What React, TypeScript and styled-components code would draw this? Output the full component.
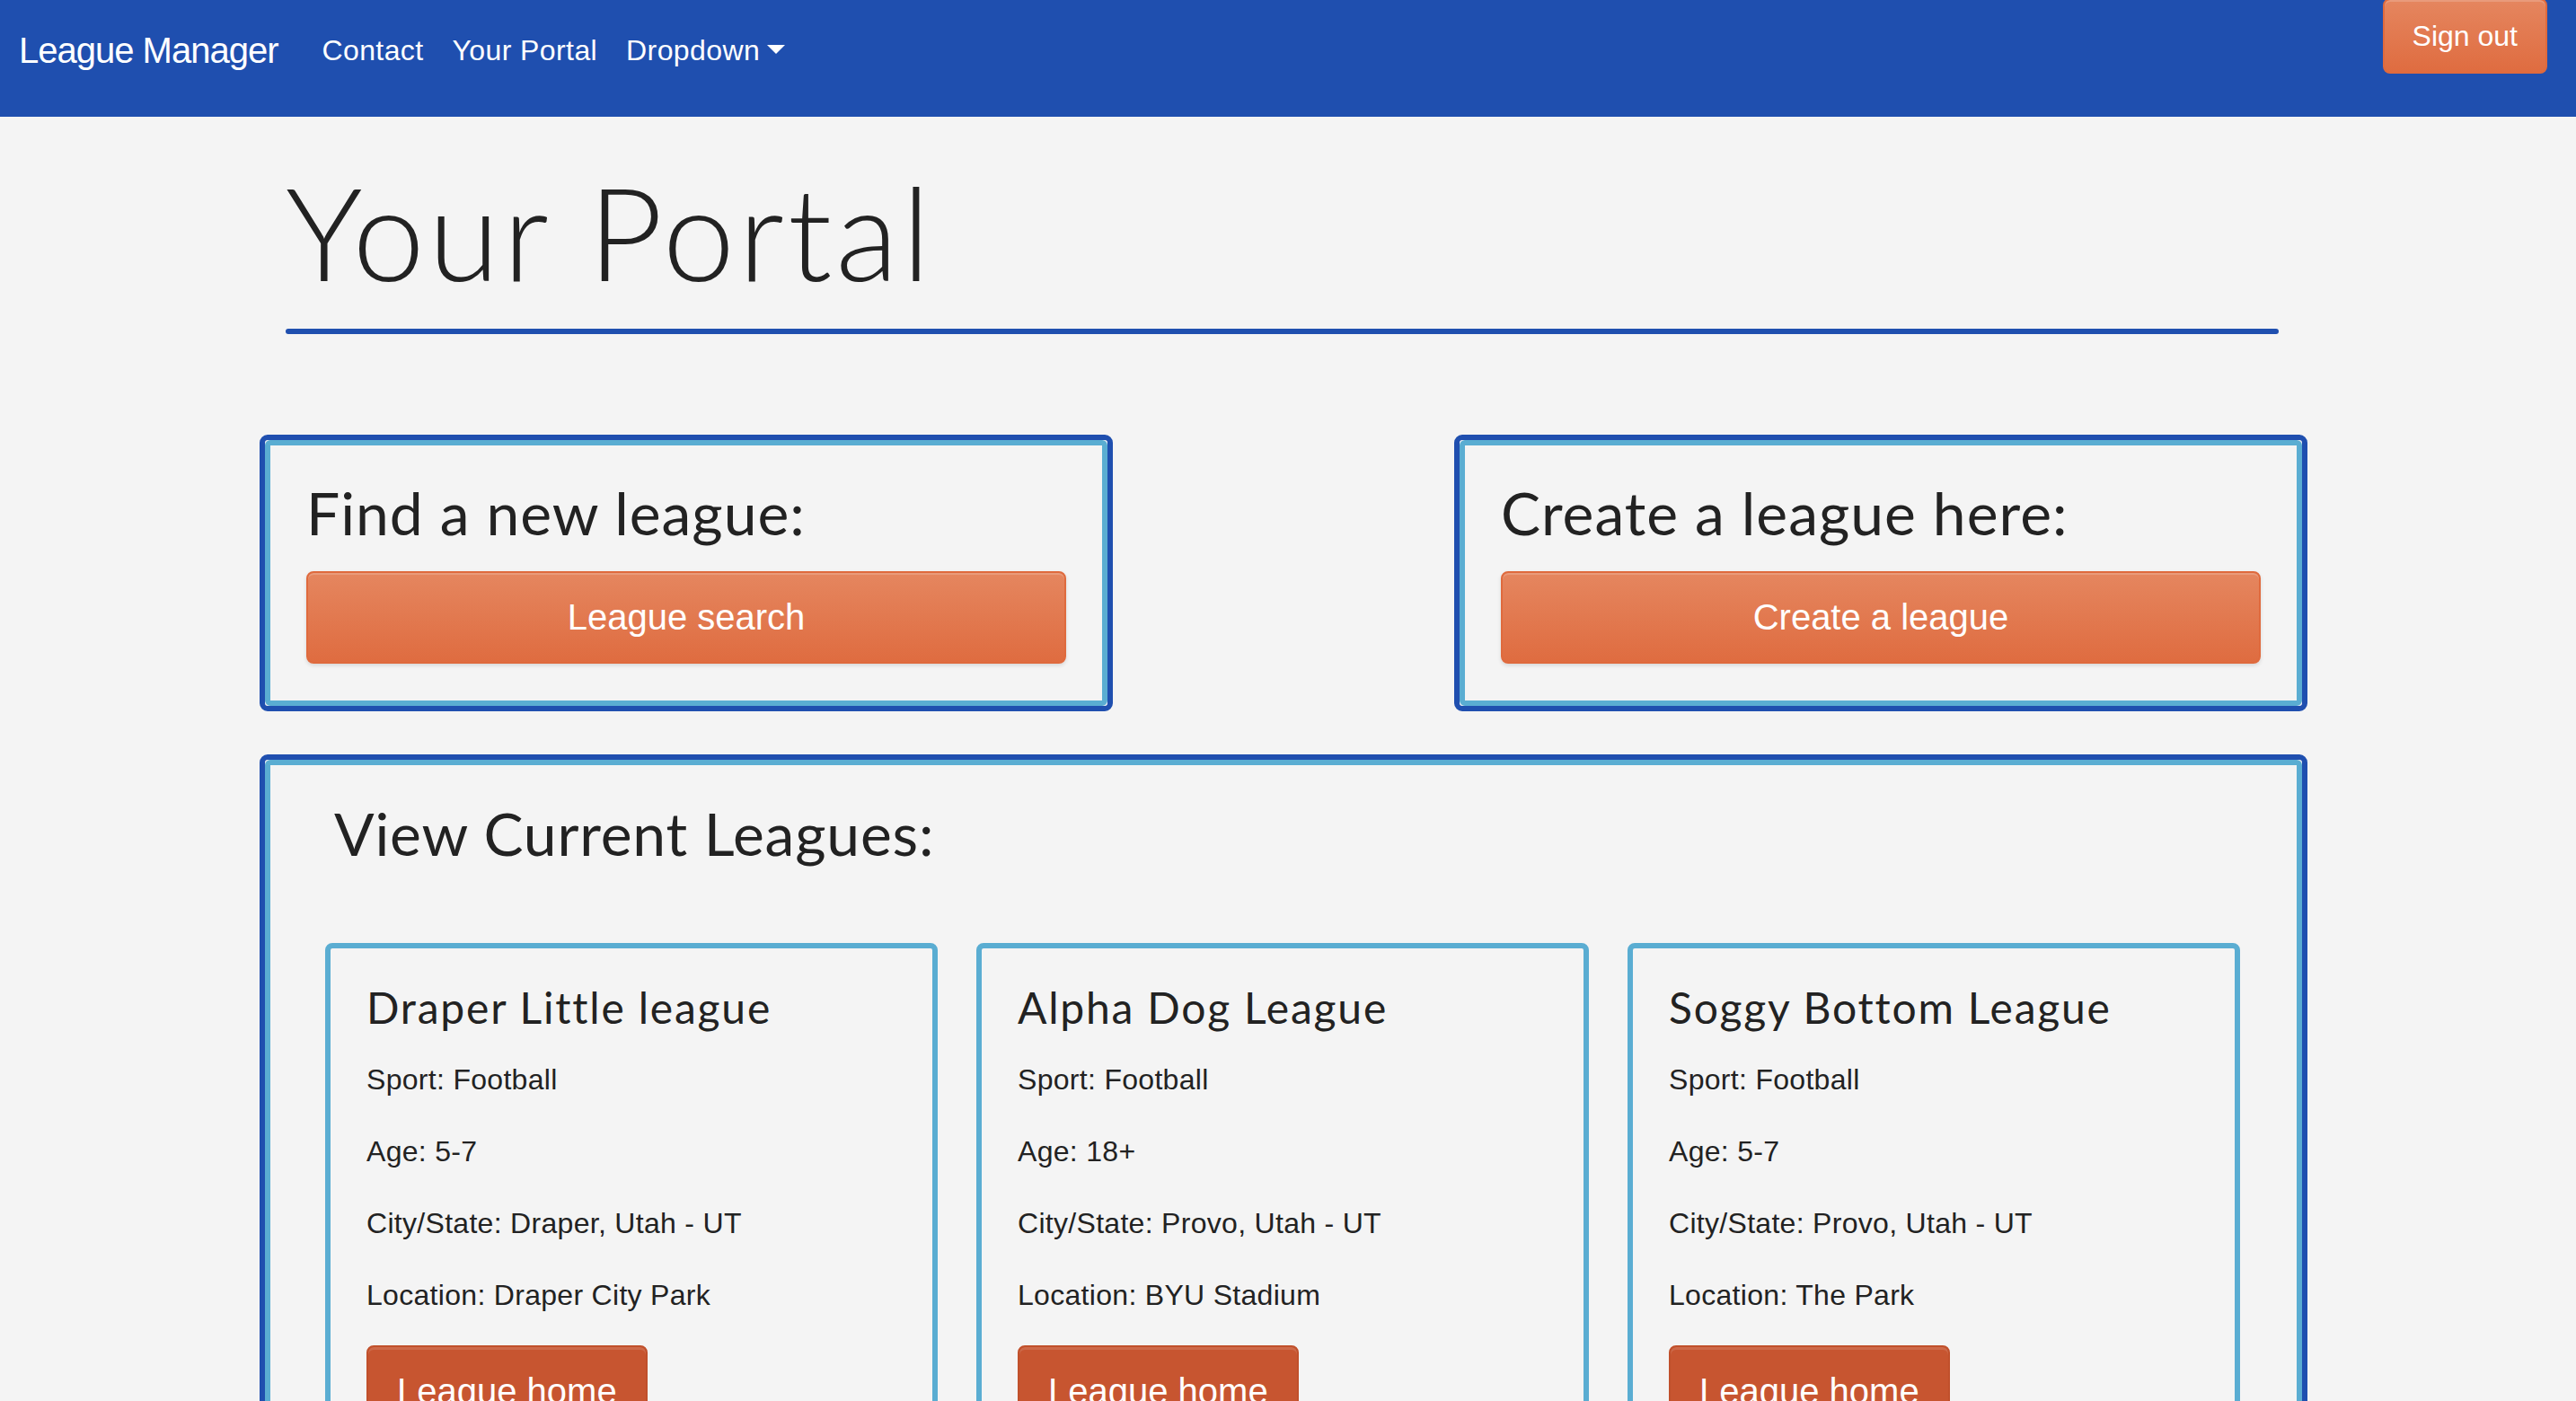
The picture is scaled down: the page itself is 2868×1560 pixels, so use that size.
import React from 'react'
import styled, { createGlobalStyle } from 'styled-components'

const leagues = [
  { id: 1, name: 'Draper Little league', sport: 'Football', age: '5-7', city: 'Draper, Utah - UT', location: 'Draper City Park' },
  { id: 2, name: 'Alpha Dog League', sport: 'Football', age: '18+', city: 'Provo, Utah - UT', location: 'BYU Stadium' },
  { id: 3, name: 'Soggy Bottom League', sport: 'Football', age: '5-7', city: 'Provo, Utah - UT', location: 'The Park' },
]

export default function App() {
  return (
    <>
      <GlobalStyle />
      <Navbar>
        <Brand href="#">League Manager</Brand>
        <NavLink href="#">Contact</NavLink>
        <NavLink href="#">Your Portal</NavLink>
        <NavLink href="#">
          Dropdown<Caret />
        </NavLink>
        <SignOut>Sign out</SignOut>
      </Navbar>
      <Main>
        <Container>
          <Header>
            <Title>Your Portal</Title>
            <Rule />
          </Header>
          <ActionRow>
            <Outline>
              <Card>
                <SectionTitle>Find a new league:</SectionTitle>
                <BigButton>League search</BigButton>
              </Card>
            </Outline>
            <Outline $col={3}>
              <Card>
                <SectionTitle>Create a league here:</SectionTitle>
                <BigButton>Create a league</BigButton>
              </Card>
            </Outline>
          </ActionRow>
          <Outline>
            <LeaguesCard>
              <LeaguesTitle>View Current Leagues:</LeaguesTitle>
              <LeagueGrid>
                {leagues.map((l) => (
                  <LeagueCard key={l.id}>
                    <LeagueName>{l.name}</LeagueName>
                    <Info>Sport: {l.sport}</Info>
                    <Info>Age: {l.age}</Info>
                    <Info>City/State: {l.city}</Info>
                    <Info>Location: {l.location}</Info>
                    <HomeButton>League home</HomeButton>
                  </LeagueCard>
                ))}
              </LeagueGrid>
            </LeaguesCard>
          </Outline>
        </Container>
      </Main>
    </>
  )
}

const GlobalStyle = createGlobalStyle`
  * { box-sizing: border-box; }
  body {
    margin: 0;
    background: #f4f4f4;
    color: #222;
    font-family: "Liberation Sans", Arial, sans-serif;
  }
`

const Navbar = styled.nav`
  height: 130px;
  background: #1f4faf;
  display: flex;
  align-items: center;
  padding: 0 32px 18px 21px;
`

const Brand = styled.a`
  font-size: 40px;
  letter-spacing: -1px;
  color: #fff;
  text-decoration: none;
  margin-right: 33px;
`

const NavLink = styled.a`
  display: flex;
  align-items: center;
  font-size: 32px;
  letter-spacing: 0.4px;
  color: #fff;
  text-decoration: none;
  padding: 0 16px;
`

const Caret = styled.span`
  display: inline-block;
  margin: 0 0 3px 8px;
  border-top: 10px solid #fff;
  border-left: 10px solid transparent;
  border-right: 10px solid transparent;
`

const SignOut = styled.button`
  margin-left: auto;
  align-self: flex-start;
  margin-top: -2px;
  height: 84px;
  padding: 0 31px;
  font-family: inherit;
  font-size: 32px;
  color: #fff;
  border: 2px solid #df6a3d;
  border-radius: 8px;
  background: linear-gradient(#e5865f, #df6c40);
  box-shadow: inset 0 2px 0 rgba(255, 255, 255, 0.18);
`

const Main = styled.main`
  padding-right: 10px;
`

const Container = styled.div`
  width: 2280px;
  margin: 0 auto;
`

const Header = styled.header`
  width: 2219px;
  margin: 42px 0 0 29px;
`

const Title = styled.h1`
  margin: 0;
  font-family: Lato, sans-serif;
  font-weight: 300;
  font-size: 144px;
  line-height: 1.2;
  letter-spacing: 4px;
`

const Rule = styled.div`
  height: 6px;
  margin-top: 21px;
  border-radius: 3px;
  background: #1f4faf;
`

const ActionRow = styled.div`
  display: grid;
  grid-template-columns: 5fr 2fr 5fr;
  margin: 112px 0 48px;
`

const Outline = styled.div<{ $col?: number }>`
  grid-column: ${(p) => p.$col ?? 'auto'};
  border: 6px solid #1f4faf;
  border-radius: 9px;
`

const Card = styled.div`
  border: 6px solid #5aadd2;
  border-radius: 6px;
  padding: 35px 40px 41px;
`

const SectionTitle = styled.h2`
  margin: 0 0 26px;
  font-family: Lato, sans-serif;
  font-weight: 400;
  font-size: 66px;
  line-height: 1.2;
  letter-spacing: 1px;
`

const BigButton = styled.button`
  display: flex;
  align-items: center;
  justify-content: center;
  width: 100%;
  height: 103px;
  font-family: inherit;
  font-size: 40px;
  color: #fff;
  border: 2px solid #df6a3d;
  border-radius: 8px;
  background: linear-gradient(#e5865f, #df6c40);
  box-shadow: inset 0 2px 0 rgba(255, 255, 255, 0.18), 0 2px 4px rgba(0, 0, 0, 0.12);
`

const LeaguesCard = styled(Card)`
  padding: 36px 63px 60px 61px;
`

const LeaguesTitle = styled(SectionTitle)`
  margin: 0 0 83px 10px;
  letter-spacing: 0.8px;
`

const LeagueGrid = styled.div`
  display: grid;
  grid-template-columns: repeat(3, 1fr);
  gap: 43px;
`

const LeagueCard = styled.div`
  border: 6px solid #5aadd2;
  border-radius: 8px;
  padding: 37px 40px 40px;
`

const LeagueName = styled.h4`
  margin: 0 0 27px;
  font-family: Lato, sans-serif;
  font-weight: 400;
  font-size: 48px;
  line-height: 1.2;
  letter-spacing: 1.8px;
`

const Info = styled.p`
  margin: 0 0 32px;
  font-size: 32px;
  line-height: 1.5;
  letter-spacing: 0.3px;
`

const HomeButton = styled.button`
  height: 103px;
  padding: 0 32px;
  font-family: inherit;
  font-size: 40px;
  color: #fff;
  border: 2px solid #c0502b;
  border-radius: 8px;
  background: #c75530;
  box-shadow: inset 0 3px 0 rgba(255, 255, 255, 0.12);
`
